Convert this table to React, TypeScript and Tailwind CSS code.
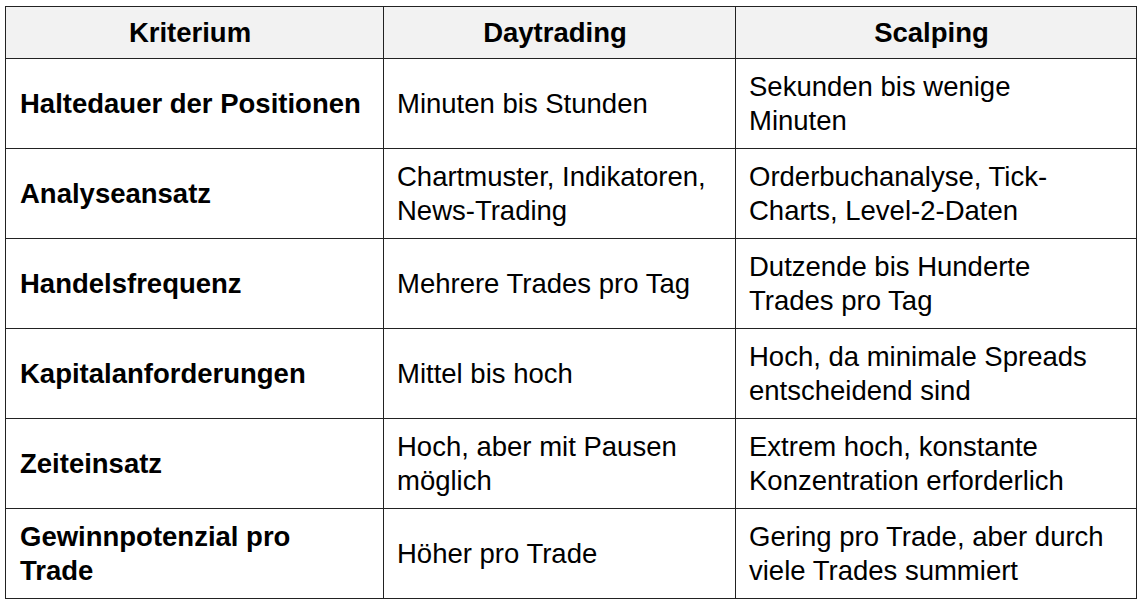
import React from "react";

const rows: [string[], string[], string[]][] = [
  [["Haltedauer der Positionen"], ["Minuten bis Stunden"], ["Sekunden bis wenige", "Minuten"]],
  [["Analyseansatz"], ["Chartmuster, Indikatoren,", "News-Trading"], ["Orderbuchanalyse, Tick-", "Charts, Level-2-Daten"]],
  [["Handelsfrequenz"], ["Mehrere Trades pro Tag"], ["Dutzende bis Hunderte", "Trades pro Tag"]],
  [["Kapitalanforderungen"], ["Mittel bis hoch"], ["Hoch, da minimale Spreads", "entscheidend sind"]],
  [["Zeiteinsatz"], ["Hoch, aber mit Pausen", "möglich"], ["Extrem hoch, konstante", "Konzentration erforderlich"]],
  [["Gewinnpotenzial pro", "Trade"], ["Höher pro Trade"], ["Gering pro Trade, aber durch", "viele Trades summiert"]],
];

function Lines({ lines }: { lines: string[] }) {
  return (
    <>
      {lines.map((l, i) => (
        <div key={i} className="whitespace-nowrap">
          {l}
        </div>
      ))}
    </>
  );
}

export default function App() {
  return (
    <div
      className="w-[1142px] h-[606px] bg-white pl-[5px] pt-[6px] text-black"
      style={{ fontFamily: '"Liberation Sans", Arial, sans-serif' }}
    >
      <table className="table-fixed border-collapse text-[27.5px] leading-[34px]">
        <thead>
          <tr className="bg-[#f2f2f2] h-[52px]">
            <th className="w-[378px] border border-[#222] pr-[9px] font-bold text-center align-middle">Kriterium</th>
            <th className="w-[352px] border border-[#222] pr-[9px] font-bold text-center align-middle">Daytrading</th>
            <th className="w-[401px] border border-[#222] pr-[9px] font-bold text-center align-middle">Scalping</th>
          </tr>
        </thead>
        <tbody>
          {rows.map((r, i) => (
            <tr key={i} className="h-[90px]">
              <td className="border border-[#222] px-[14px] font-bold align-middle">
                <Lines lines={r[0]} />
              </td>
              <td className="border border-[#222] px-[13px] align-middle">
                <Lines lines={r[1]} />
              </td>
              <td className="border border-[#222] px-[13px] align-middle">
                <Lines lines={r[2]} />
              </td>
            </tr>
          ))}
        </tbody>
      </table>
    </div>
  );
}
